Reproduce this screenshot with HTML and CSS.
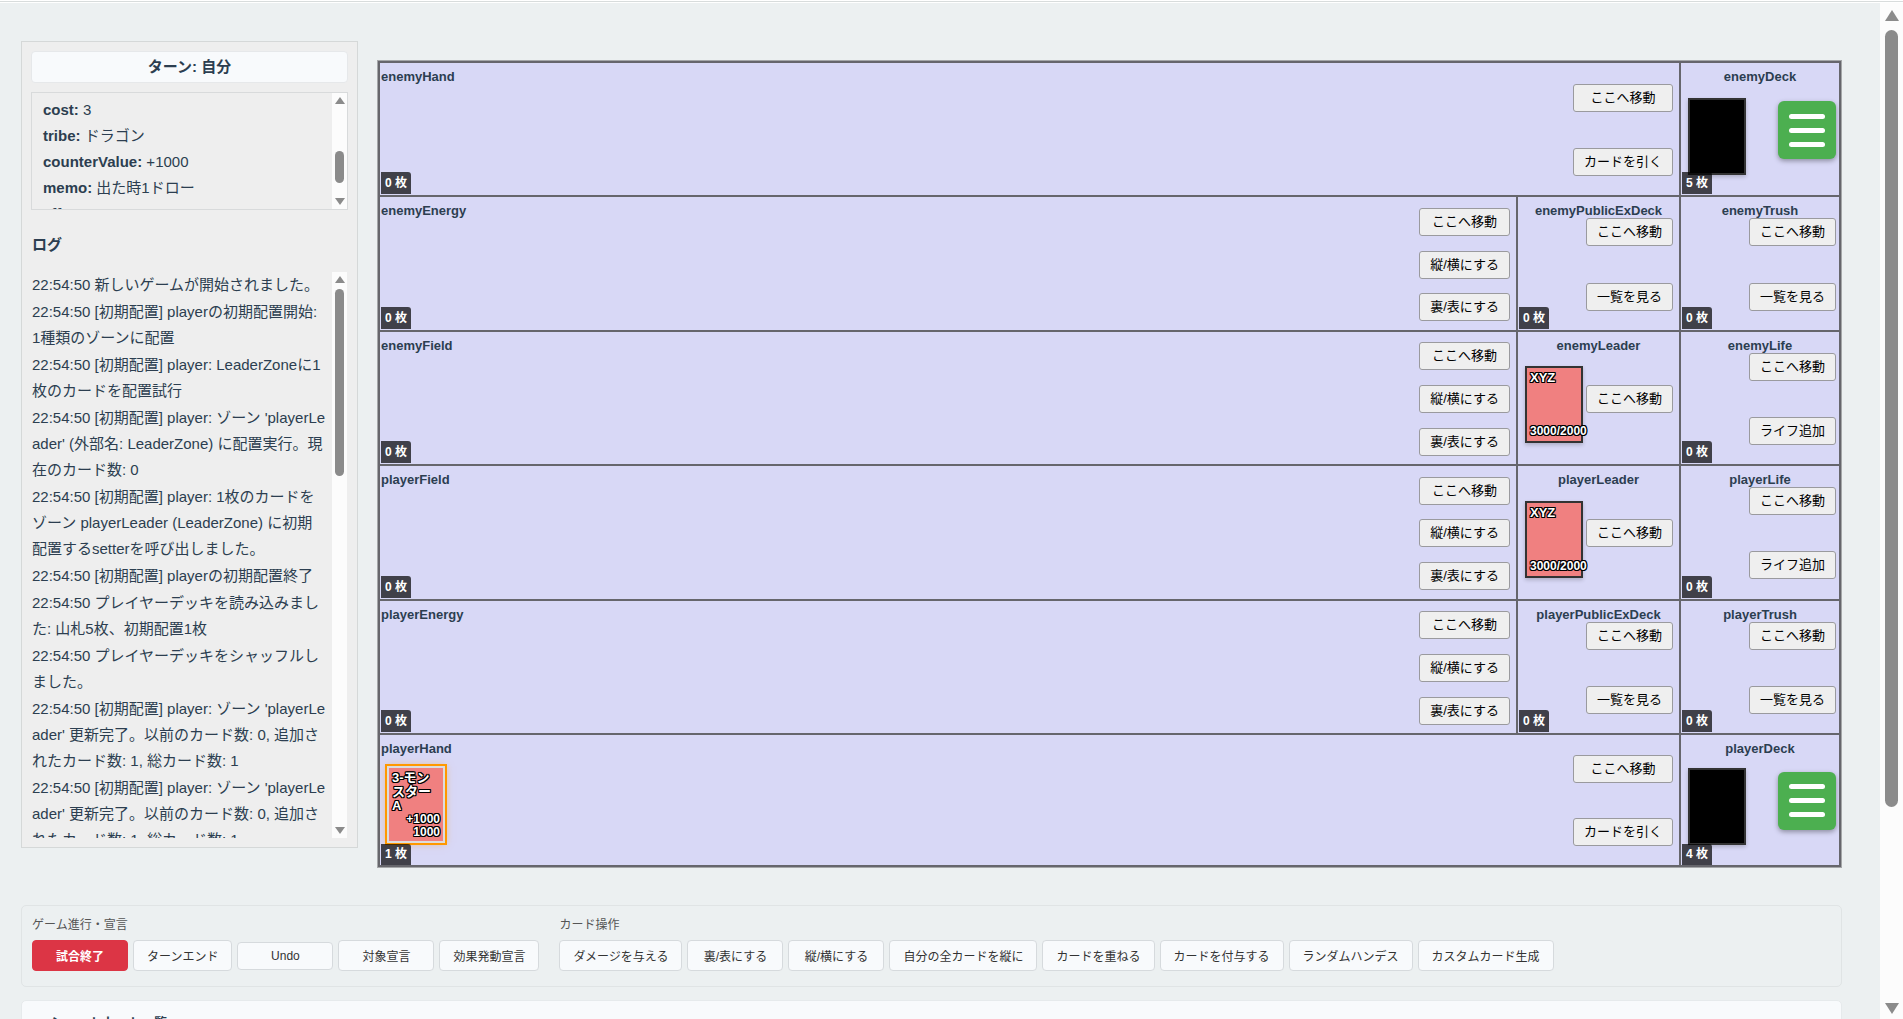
FILE: index.html
```
<!DOCTYPE html>
<html lang="ja">
<head>
    <meta charset="UTF-8">
    <title>カードゲーム</title>
    <meta name="viewport" content="width=device-width, initial-scale=1.0">
    <link rel="stylesheet" href="styles.css">
</head>
<body>
    <div class="page">
        <div class="game">
            <aside class="sidebar">
                <div class="turn">ターン: 自分</div>
                <div class="detail">
                    <div class="detail-body">
                        <div><b>cost:</b> 3</div>
                        <div><b>tribe:</b> ドラゴン</div>
                        <div><b>counterValue:</b> +1000</div>
                        <div><b>memo:</b> 出た時1ドロー</div>
                        <div><b>effect:</b> 2</div>
                    </div>
                    <div class="scrollbar detail-scroll"><span class="thumb"></span></div>
                </div>
                <h4 class="log-title">ログ</h4>
                <div class="log">
                    <div class="log-body">
                        <div>22:54:50 新しいゲームが開始されました。</div>
                        <div>22:54:50 [初期配置] playerの初期配置開始: 1種類のゾーンに配置</div>
                        <div>22:54:50 [初期配置] player: LeaderZoneに1枚のカードを配置試行</div>
                        <div>22:54:50 [初期配置] player: ゾーン 'playerLeader' (外部名: LeaderZone) に配置実行。現在のカード数: 0</div>
                        <div>22:54:50 [初期配置] player: 1枚のカードをゾーン playerLeader (LeaderZone) に初期配置するsetterを呼び出しました。</div>
                        <div>22:54:50 [初期配置] playerの初期配置終了</div>
                        <div>22:54:50 プレイヤーデッキを読み込みました: 山札5枚、初期配置1枚</div>
                        <div>22:54:50 プレイヤーデッキをシャッフルしました。</div>
                        <div>22:54:50 [初期配置] player: ゾーン 'playerLeader' 更新完了。以前のカード数: 0, 追加されたカード数: 1, 総カード数: 1</div>
                        <div>22:54:50 [初期配置] player: ゾーン 'playerLeader' 更新完了。以前のカード数: 0, 追加されたカード数: 1, 総カード数: 1</div>
                    </div>
                    <div class="scrollbar log-scroll"><span class="thumb"></span></div>
                </div>
            </aside>

            <main class="board">
                <!-- enemy hand / deck -->
                <section class="zone wide">
                    <div class="zone-name">enemyHand</div>
                    <div class="zone-buttons"><button>ここへ移動</button><button>カードを引く</button></div>
                    <div class="count">0 枚</div>
                </section>
                <section class="zone side">
                    <div class="zone-name">enemyDeck</div>
                    <div class="card back"></div>
                    <button class="menu" aria-label="enemyDeck メニュー"><span></span><span></span><span></span></button>
                    <div class="count">5 枚</div>
                </section>

                <!-- enemy energy -->
                <section class="zone">
                    <div class="zone-name">enemyEnergy</div>
                    <div class="zone-buttons"><button>ここへ移動</button><button>縦/横にする</button><button>裏/表にする</button></div>
                    <div class="count">0 枚</div>
                </section>
                <section class="zone side">
                    <div class="zone-name">enemyPublicExDeck</div>
                    <div class="zone-buttons"><button>ここへ移動</button><button>一覧を見る</button></div>
                    <div class="count">0 枚</div>
                </section>
                <section class="zone side">
                    <div class="zone-name">enemyTrush</div>
                    <div class="zone-buttons"><button>ここへ移動</button><button>一覧を見る</button></div>
                    <div class="count">0 枚</div>
                </section>

                <!-- enemy field -->
                <section class="zone">
                    <div class="zone-name">enemyField</div>
                    <div class="zone-buttons"><button>ここへ移動</button><button>縦/横にする</button><button>裏/表にする</button></div>
                    <div class="count">0 枚</div>
                </section>
                <section class="zone side">
                    <div class="zone-name">enemyLeader</div>
                    <div class="card"><div class="card-name">XYZ</div><div class="card-stats">3000/2000</div></div>
                    <div class="zone-buttons"><button>ここへ移動</button></div>
                </section>
                <section class="zone side">
                    <div class="zone-name">enemyLife</div>
                    <div class="zone-buttons"><button>ここへ移動</button><button>ライフ追加</button></div>
                    <div class="count">0 枚</div>
                </section>

                <!-- player field -->
                <section class="zone">
                    <div class="zone-name">playerField</div>
                    <div class="zone-buttons"><button>ここへ移動</button><button>縦/横にする</button><button>裏/表にする</button></div>
                    <div class="count">0 枚</div>
                </section>
                <section class="zone side">
                    <div class="zone-name">playerLeader</div>
                    <div class="card"><div class="card-name">XYZ</div><div class="card-stats">3000/2000</div></div>
                    <div class="zone-buttons"><button>ここへ移動</button></div>
                </section>
                <section class="zone side">
                    <div class="zone-name">playerLife</div>
                    <div class="zone-buttons"><button>ここへ移動</button><button>ライフ追加</button></div>
                    <div class="count">0 枚</div>
                </section>

                <!-- player energy -->
                <section class="zone">
                    <div class="zone-name">playerEnergy</div>
                    <div class="zone-buttons"><button>ここへ移動</button><button>縦/横にする</button><button>裏/表にする</button></div>
                    <div class="count">0 枚</div>
                </section>
                <section class="zone side">
                    <div class="zone-name">playerPublicExDeck</div>
                    <div class="zone-buttons"><button>ここへ移動</button><button>一覧を見る</button></div>
                    <div class="count">0 枚</div>
                </section>
                <section class="zone side">
                    <div class="zone-name">playerTrush</div>
                    <div class="zone-buttons"><button>ここへ移動</button><button>一覧を見る</button></div>
                    <div class="count">0 枚</div>
                </section>

                <!-- player hand / deck -->
                <section class="zone wide">
                    <div class="zone-name">playerHand</div>
                    <div class="card selected"><div class="card-name">3-モンスターA</div><div class="card-stats">+1000<br>1000</div></div>
                    <div class="zone-buttons"><button>ここへ移動</button><button>カードを引く</button></div>
                    <div class="count">1 枚</div>
                </section>
                <section class="zone side">
                    <div class="zone-name">playerDeck</div>
                    <div class="card back"></div>
                    <button class="menu" aria-label="playerDeck メニュー"><span></span><span></span><span></span></button>
                    <div class="count">4 枚</div>
                </section>
            </main>
        </div>

        <div class="actions">
            <div class="action-group">
                <div class="action-label">ゲーム進行・宣言</div>
                <div class="action-row">
                    <button class="danger">試合終了</button>
                    <button>ターンエンド</button>
                    <button>Undo</button>
                    <button>対象宣言</button>
                    <button>効果発動宣言</button>
                </div>
            </div>
            <div class="action-group">
                <div class="action-label">カード操作</div>
                <div class="action-row">
                    <button>ダメージを与える</button>
                    <button>裏/表にする</button>
                    <button>縦/横にする</button>
                    <button>自分の全カードを縦に</button>
                    <button>カードを重ねる</button>
                    <button>カードを付与する</button>
                    <button>ランダムハンデス</button>
                    <button>カスタムカード生成</button>
                </div>
            </div>
        </div>

        <div class="shortcuts">
            <h4>ショートカット一覧</h4>
        </div>
    </div>
    <div class="scrollbar page-scroll"><span class="thumb"></span></div>
</body>
</html>
```

FILE: styles.css
```
* { box-sizing: border-box; }
body {
    margin: 0; padding-top: 3px; height: 100vh; overflow: hidden; display: flex;
    font-family: "Liberation Sans", Arial, "Noto Sans CJK JP", sans-serif;
    font-size: 15px; line-height: 26px; color: #2c3e50;
    background: linear-gradient(#fff 1px, #d8dcdc 1px 2px, #fff 2px) top / 100% 3px no-repeat #ecf0f1;
}
button { font-family: inherit; cursor: pointer; }

.page { flex: 1; min-width: 0; padding: 38px 38px 0 21px; }
.game { display: flex; align-items: flex-start; gap: 19px; }

/* left column */
.sidebar {
    width: 337px; height: 807px; flex-shrink: 0; display: flex; flex-direction: column;
    padding: 9px; background: #eee; border: 1px solid #d5d8d8;
}
.turn {
    height: 32px; line-height: 29px; text-align: center; font-weight: bold;
    background: #f8fafc; border: 1px solid #e6e8ea; border-radius: 4px;
}
.detail { display: flex; height: 118px; margin-top: 9px; border: 1px solid #d8dadb; overflow: hidden; }
.detail-body { flex: 1; padding: 4px 11px; }
.log-title { margin: 22px 1px 14px; font-size: 15px; }
.log { flex: 1; min-height: 0; display: flex; overflow: hidden; padding: 0 1px; }
.log-body { flex: 1; display: flex; flex-direction: column; gap: 1px; padding-right: 6px; word-break: break-all; }

/* scrollbars */
.scrollbar {
    width: 15px; flex-shrink: 0; display: flex; flex-direction: column; align-items: center;
    background: #fcfcfc; padding: 4px 0;
}
.scrollbar::before, .scrollbar::after { content: ""; border: 5px solid transparent; }
.scrollbar::before { border-top: 0; border-bottom: 7px solid #8b8b8b; }
.scrollbar::after { border-bottom: 0; border-top: 7px solid #8b8b8b; margin-top: auto; }
.thumb { width: 9px; border-radius: 5px; background: #8b8b8b; }
.detail-scroll .thumb { height: 32px; margin-top: 47px; }
.log-scroll .thumb { height: 187px; margin-top: 6px; }
.page-scroll { width: 23px; padding: 7px 0 5px; }
.page-scroll::before { border-width: 0 7px 11px; }
.page-scroll::after { border-width: 11px 7px 0; }
.page-scroll .thumb { width: 13px; height: 777px; margin-top: 9px; border-radius: 7px; }

/* board */
.board {
    flex: 1; min-width: 0; min-height: 808px; margin-top: 19px; padding: 2px; background: #66666c; border: 1px solid #a5a7a9;
    display: grid; grid-template-columns: 1fr 161px 158px; grid-template-rows: repeat(5, 1fr) 130px; gap: 2px;
}
.zone {
    position: relative; display: flex; align-items: center;
    background: #d8d8f6; padding: 3px 6px 1px 7px;
}
.zone:nth-child(3n+2), .zone:last-child { padding-right: 3px; }
.zone.wide { grid-column: span 2; }
.zone-name {
    position: absolute; top: 5px; left: 1px; right: 1px;
    font-size: 13px; font-weight: bold; line-height: 18px;
}
.side .zone-name { text-align: center; }
.zone-buttons {
    position: relative; margin-left: auto; align-self: stretch;
    display: flex; flex-direction: column; justify-content: space-around;
}
.zone-buttons button {
    padding: 4px 10px; font-size: 13px; line-height: 18px; color: #000;
    background: #efefef; border: 1px solid #9a9a9e; border-radius: 3px;
}
.count {
    position: absolute; left: 1px; bottom: 1px; padding: 0 4px;
    font-size: 12px; font-weight: bold; line-height: 22px; color: #fff;
    background: rgba(0, 0, 0, 0.7); border-radius: 0 3px 0 0;
}
.zone:nth-last-child(-n+2) .count { bottom: 0; line-height: 21px; }

/* cards */
.card {
    position: relative; width: 58px; height: 77px; margin-top: 12px; padding: 3px;
    display: flex; flex-direction: column; justify-content: space-between;
    background: #f08080; border: 2px solid #333; box-shadow: 0 2px 4px rgba(0, 0, 0, 0.2);
    color: #fff; font-size: 13px; font-weight: bold; line-height: 14px; white-space: nowrap;
    text-shadow: 1px 0 #000, -1px 0 #000, 0 1px #000, 0 -1px #000, 1px 1px #000, -1px -1px #000, 1px -1px #000, -1px 1px #000;
}
.card.back { background: #000; }
.card-name { white-space: normal; word-break: break-all; }
.card-stats { font-size: 12px; line-height: 13px; }
.card.selected { margin-top: 8px; border-color: #ddd; box-shadow: 0 0 0 2px #ff9800, 0 0 8px rgba(255, 152, 0, 0.5); }
.selected .card-stats { text-align: right; }

.menu {
    width: 58px; height: 58px; margin-left: auto; padding: 0 11px;
    display: flex; flex-direction: column; justify-content: center; gap: 9px;
    background: #4caf50; border: none; border-radius: 6px; box-shadow: 0 2px 5px rgba(0, 0, 0, 0.35);
}
.menu span { height: 5px; border-radius: 3px; background: #fff; }

/* bottom panels */
.actions {
    display: flex; gap: 20px; margin-top: 37px; padding: 10px 10px 15px;
    border: 1px solid #e0e4e5; border-radius: 5px;
}
.action-label { font-size: 12px; line-height: 18px; margin-bottom: 6px; color: #555; }
.action-row { display: flex; align-items: center; gap: 5px; }
.action-row button {
    min-width: 96px; padding: 6px 13px; font-size: 12px; color: #333;
    background: #f8fafc; border: 1px solid #d6dadd; border-radius: 4px;
}
.action-row .danger { background: #dc3545; border-color: #dc3545; color: #fff; font-weight: bold; }
.shortcuts {
    height: 200px; margin-top: 13px; padding: 9px 28px;
    background: #f8fafc; border: 1px solid #e6eaec; border-radius: 5px;
}
.shortcuts h4 { margin: 0; font-size: 13px; }
```
